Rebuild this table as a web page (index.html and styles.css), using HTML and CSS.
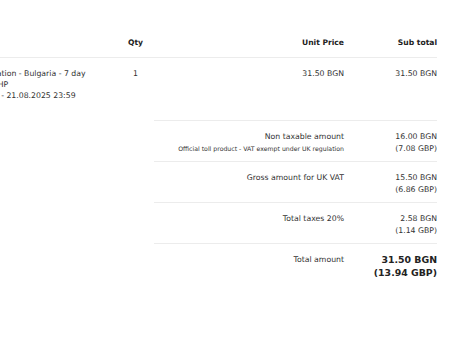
FILE: index.html
```html
<!DOCTYPE html>
<html lang="en">
<head>
    <meta charset="UTF-8" />
    <meta name="viewport" content="width=device-width, initial-scale=1" />
    <title>Order summary</title>
    <link rel="stylesheet" href="styles.css">
</head>
<body>
    <div class="order-wrap">
        <table class="order-table">
            <colgroup>
                <col class="col-desc">
                <col class="col-qty">
                <col class="col-unit">
                <col class="col-sub">
            </colgroup>
            <thead>
                <tr>
                    <th class="left"></th>
                    <th class="center">Qty</th>
                    <th>Unit Price</th>
                    <th>Sub total</th>
                </tr>
            </thead>
            <tbody>
                <!-- Item -->
                <tr class="item-row">
                    <td class="left">
                        <div>E-vignette registration - Bulgaria - 7 day</div>
                        <div>Vehicle: CB 1234 HP</div>
                        <div>15.08.2025 00:00 - 21.08.2025 23:59</div>
                    </td>
                    <td class="center">1</td>
                    <td>31.50 BGN</td>
                    <td>31.50 BGN</td>
                </tr>

                <!-- Summary -->
                <tr class="sum-row">
                    <td colspan="2" class="blank"></td>
                    <td>
                        <div>Non taxable amount</div>
                        <div class="note">Official toll product - VAT exempt under UK regulation</div>
                    </td>
                    <td>
                        <div>16.00 BGN</div>
                        <div>(7.08 GBP)</div>
                    </td>
                </tr>
                <tr class="sum-row">
                    <td colspan="2" class="blank"></td>
                    <td>Gross amount for UK VAT</td>
                    <td>
                        <div>15.50 BGN</div>
                        <div>(6.86 GBP)</div>
                    </td>
                </tr>
                <tr class="sum-row">
                    <td colspan="2" class="blank"></td>
                    <td>Total taxes 20%</td>
                    <td>
                        <div>2.58 BGN</div>
                        <div>(1.14 GBP)</div>
                    </td>
                </tr>
                <tr class="sum-row total-row">
                    <td colspan="2" class="blank"></td>
                    <td>Total amount</td>
                    <td class="total-value">
                        <div>31.50 BGN</div>
                        <div>(13.94 GBP)</div>
                    </td>
                </tr>
            </tbody>
        </table>
    </div>
</body>
</html>
```

FILE: styles.css
```css
* {
    box-sizing: border-box;
    margin: 0;
    padding: 0;
}

html, body {
    background: #fff;
}

body {
    font-family: "DejaVu Sans", Verdana, sans-serif;
    font-size: 7.75px;
    line-height: 11.5px;
    color: #333;
    overflow: hidden;
}

/* table is wider than the window and sticks to the right */
.order-wrap {
    display: flex;
    justify-content: flex-end;
    padding: 29px 13px 0 0;
    overflow: hidden;
}

.order-table {
    flex: none;
    width: 507.5px;
    table-layout: fixed;
    border-collapse: collapse;
}

.col-desc { width: 187.5px; }
.col-qty { width: 37px; }
.col-unit { width: 190px; }
.col-sub { width: 93px; }

.order-table th,
.order-table td {
    text-align: right;
    vertical-align: top;
    padding: 0;
    font-weight: normal;
}

.order-table .left { text-align: left; }
.order-table .center { text-align: center; }

.order-table th {
    font-size: 7.6px;
    font-weight: bold;
    color: #222;
    padding: 8px 0;
    border-bottom: 1px solid #ececec;
}

.order-table .item-row td {
    padding: 10px 0 20px;
    line-height: 11px;
    white-space: nowrap;
}

.order-table .sum-row td {
    padding: 10px 0 7px;
    border-top: 1px solid #ececec;
}

.order-table .sum-row td.blank {
    border-top: none;
}

.note {
    font-size: 6.2px;
}

.order-table .total-row td {
    padding-top: 10px;
}

.order-table .total-value {
    font-size: 9.4px;
    font-weight: bold;
    line-height: 12.5px;
    color: #222;
}
```
